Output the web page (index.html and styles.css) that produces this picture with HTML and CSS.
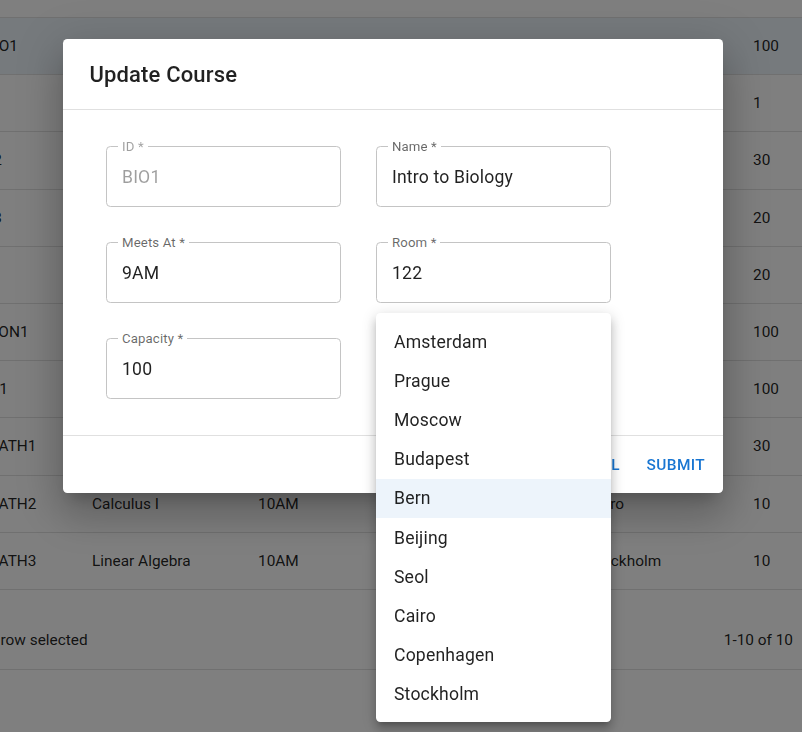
FILE: index.html
```html
<!DOCTYPE html>
<html lang="en">
<head>
<meta charset="utf-8">
<title>Courses</title>
<link rel="stylesheet" href="styles.css">
</head>
<body>
<div class="page">
  <div class="datagrid">
    <div class="grid-top"></div>
    <div class="grid-row selected"><div class="cell id">BIO1</div><div class="cell">Intro to Biology</div><div class="cell">9AM</div><div class="cell">122</div><div class="cell">Amsterdam</div><div class="cell">100</div></div>
    <div class="grid-row"><div class="cell id">AI</div><div class="cell">Independent Study</div><div class="cell">1PM</div><div class="cell">101</div><div class="cell">Prague</div><div class="cell">1</div></div>
    <div class="grid-row"><div class="cell id">L2</div><div class="cell">Chemistry II</div><div class="cell">11AM</div><div class="cell">204</div><div class="cell">Moscow</div><div class="cell">30</div></div>
    <div class="grid-row"><div class="cell id">L3</div><div class="cell">Chemistry III</div><div class="cell">2PM</div><div class="cell">205</div><div class="cell">Budapest</div><div class="cell">20</div></div>
    <div class="grid-row"><div class="cell id">L1</div><div class="cell">English I</div><div class="cell">9AM</div><div class="cell">310</div><div class="cell">Bern</div><div class="cell">20</div></div>
    <div class="grid-row"><div class="cell id">ISON1</div><div class="cell">Web Data</div><div class="cell">3PM</div><div class="cell">402</div><div class="cell">Beijing</div><div class="cell">100</div></div>
    <div class="grid-row"><div class="cell id">AI1</div><div class="cell">Art History</div><div class="cell">12PM</div><div class="cell">118</div><div class="cell">Seol</div><div class="cell">100</div></div>
    <div class="grid-row"><div class="cell id">MATH1</div><div class="cell">Pre-Calculus</div><div class="cell">8AM</div><div class="cell">220</div><div class="cell">Copenhagen</div><div class="cell">30</div></div>
    <div class="grid-row"><div class="cell id">MATH2</div><div class="cell">Calculus I</div><div class="cell">10AM</div><div class="cell">221</div><div class="cell">Cairo</div><div class="cell">10</div></div>
    <div class="grid-row"><div class="cell id">MATH3</div><div class="cell">Linear Algebra</div><div class="cell">10AM</div><div class="cell">222</div><div class="cell">Stockholm</div><div class="cell">10</div></div>
    <div class="grid-footer">
      <span class="selected-count">1 row selected</span>
      <span class="pagination">1-10 of 10</span>
    </div>
  </div>
</div>

<div class="backdrop"></div>

<div class="dialog" role="dialog">
  <h2 class="dialog-title">Update Course</h2>
  <div class="dialog-content">
    <div class="field disabled">
      <span class="field-label">ID *</span>
      <span class="field-value">BIO1</span>
    </div>
    <div class="field">
      <span class="field-label">Name *</span>
      <span class="field-value">Intro to Biology</span>
    </div>
    <div class="field">
      <span class="field-label">Meets At *</span>
      <span class="field-value">9AM</span>
    </div>
    <div class="field">
      <span class="field-label">Room *</span>
      <span class="field-value">122</span>
    </div>
    <div class="field">
      <span class="field-label">Capacity *</span>
      <span class="field-value">100</span>
    </div>
    <div class="field">
      <span class="field-label">Location *</span>
      <span class="field-value">Bern</span>
    </div>
  </div>
  <div class="dialog-actions">
    <button class="btn">Cancel</button>
    <button class="btn">Submit</button>
  </div>
</div>

<ul class="listbox" role="listbox">
  <li class="option">Amsterdam</li>
  <li class="option">Prague</li>
  <li class="option">Moscow</li>
  <li class="option">Budapest</li>
  <li class="option focused">Bern</li>
  <li class="option">Beijing</li>
  <li class="option">Seol</li>
  <li class="option">Cairo</li>
  <li class="option">Copenhagen</li>
  <li class="option">Stockholm</li>
</ul>
</body>
</html>
```

FILE: styles.css
```css
* { box-sizing: border-box; }

html, body {
  margin: 0;
  padding: 0;
  width: 802px;
  height: 732px;
  overflow: hidden;
  background: #ffffff;
  font-family: Roboto, "Liberation Sans", Arial, sans-serif;
  color: rgba(0, 0, 0, 0.87);
}

.page {
  width: 802px;
  height: 732px;
  overflow: hidden;
}

.datagrid {
  margin-left: -26px;
  width: 828px;
  font-size: 15.4px;
}

.grid-top {
  height: 18px;
  border-bottom: 1px solid #e0e0e0;
}

.grid-row {
  display: grid;
  grid-template-columns: 107px 166px 165px 165px 165px 1fr;
  height: 57.2px;
  align-items: center;
  border-bottom: 1px solid #e0e0e0;
}

.grid-row.selected {
  background: rgba(25, 118, 210, 0.08);
}

.cell {
  padding-left: 11px;
  white-space: nowrap;
  overflow: hidden;
}

.grid-footer {
  height: 80px;
  display: flex;
  justify-content: space-between;
  align-items: flex-start;
  padding: 41px 9px 0 14px;
  border-bottom: 1px solid #e0e0e0;
  font-size: 15.4px;
}

.backdrop {
  position: fixed;
  inset: 0;
  background: rgba(0, 0, 0, 0.5);
}

.dialog {
  position: absolute;
  left: 63px;
  top: 39px;
  width: 660px;
  background: #ffffff;
  border-radius: 4.4px;
  box-shadow: 0px 11px 15px -7px rgba(0,0,0,0.2), 0px 24px 38px 3px rgba(0,0,0,0.14), 0px 9px 46px 8px rgba(0,0,0,0.12);
}

.dialog-title {
  margin: 0;
  padding: 17.6px 26.4px;
  font-size: 22px;
  font-weight: 500;
  line-height: 35.2px;
  letter-spacing: 0.0075em;
  color: rgba(0, 0, 0, 0.87);
}

.dialog-content {
  border-top: 1px solid #e0e0e0;
  border-bottom: 1px solid #e0e0e0;
  padding: 36px 43px 36px;
  display: grid;
  grid-template-columns: 235px 235px;
  column-gap: 35px;
  row-gap: 35px;
}

.field {
  position: relative;
  height: 61px;
  border: 1px solid #c4c4c4;
  border-radius: 4.4px;
  display: flex;
  align-items: center;
  padding-left: 15px;
}

.field-label {
  position: absolute;
  left: 11px;
  top: -8px;
  padding: 0 4px;
  background: #ffffff;
  font-size: 13.2px;
  line-height: 15px;
  color: rgba(0, 0, 0, 0.6);
  letter-spacing: 0.01em;
}

.field-value {
  font-size: 17.6px;
  letter-spacing: 0.01em;
  color: rgba(0, 0, 0, 0.87);
}

.field.disabled .field-label,
.field.disabled .field-value {
  color: rgba(0, 0, 0, 0.38);
}

.dialog-actions {
  height: 57px;
  display: flex;
  justify-content: flex-end;
  align-items: center;
  gap: 8.8px;
  padding: 0 9px;
}

.btn {
  border: 0;
  background: transparent;
  font-family: inherit;
  font-size: 15.4px;
  font-weight: 500;
  text-transform: uppercase;
  letter-spacing: 0.02857em;
  color: #1976d2;
  padding: 6.6px 8.8px;
  line-height: 26px;
  border-radius: 4.4px;
}

.listbox {
  position: absolute;
  left: 376px;
  top: 313px;
  width: 235px;
  margin: 0;
  padding: 9.5px 0 9px;
  list-style: none;
  background: #ffffff;
  border-radius: 4.4px;
  box-shadow: 0px 5px 5px -3px rgba(0,0,0,0.2), 0px 8px 10px 1px rgba(0,0,0,0.14), 0px 3px 14px 2px rgba(0,0,0,0.12);
}

.option {
  height: 39.1px;
  display: flex;
  align-items: center;
  padding-left: 18px;
  font-size: 17.6px;
  letter-spacing: 0.01em;
  color: rgba(0, 0, 0, 0.87);
}

.option.focused {
  background: rgba(25, 118, 210, 0.08);
}
```
